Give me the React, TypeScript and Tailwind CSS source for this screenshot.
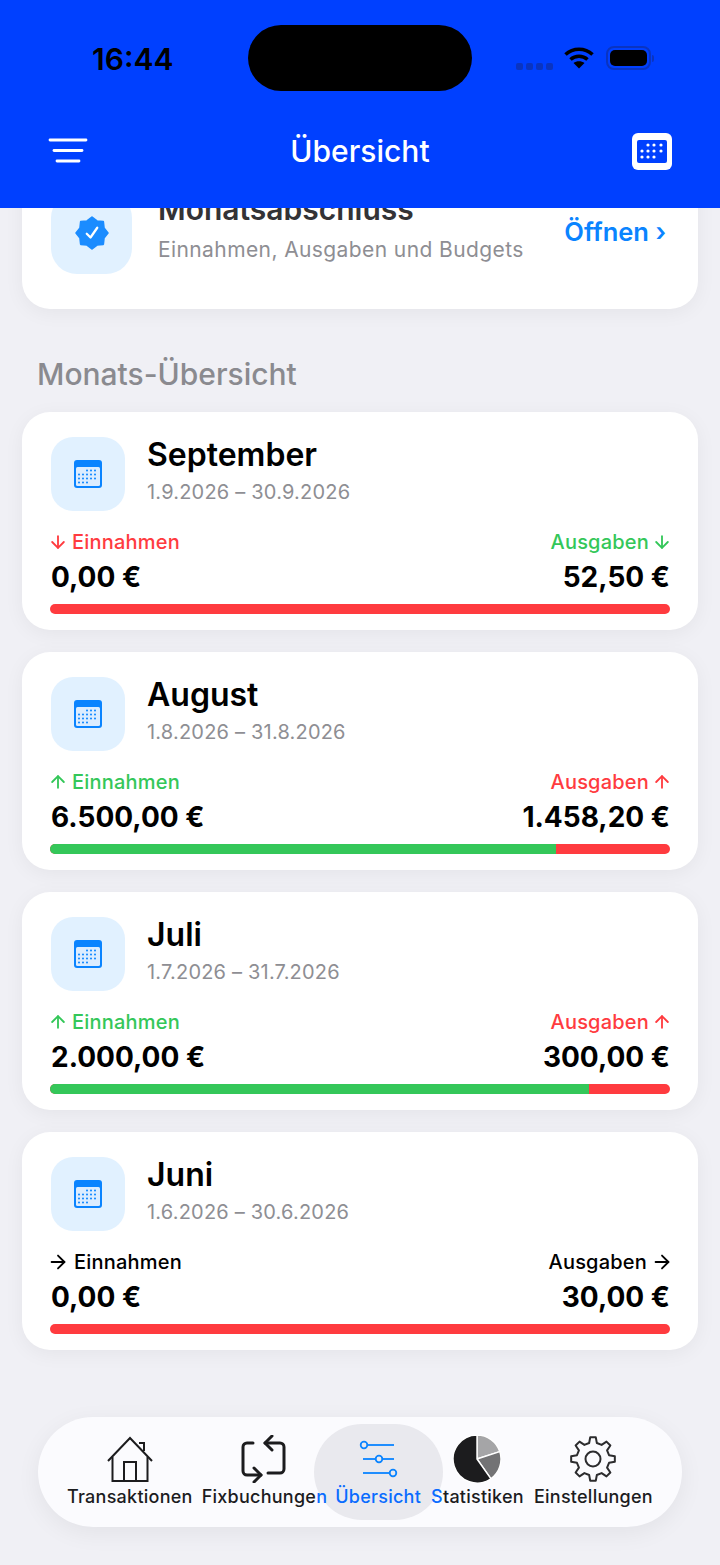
import { ArrowDown, ArrowRight, ArrowUp } from "lucide-react";

const months = [
  { name: "September", range: "1.9.2026 – 30.9.2026", income: "0,00 €", expense: "52,50 €", incomeColor: "text-[#ff3b3f]", expenseColor: "text-[#34c759]", dir: "down", green: 0 },
  { name: "August", range: "1.8.2026 – 31.8.2026", income: "6.500,00 €", expense: "1.458,20 €", incomeColor: "text-[#34c759]", expenseColor: "text-[#ff3b3f]", dir: "up", green: 81.6 },
  { name: "Juli", range: "1.7.2026 – 31.7.2026", income: "2.000,00 €", expense: "300,00 €", incomeColor: "text-[#34c759]", expenseColor: "text-[#ff3b3f]", dir: "up", green: 87 },
  { name: "Juni", range: "1.6.2026 – 30.6.2026", income: "0,00 €", expense: "30,00 €", incomeColor: "text-black", expenseColor: "text-black", dir: "flat", green: 0 },
];

const Arrow = ({ dir }: { dir: string }) => {
  if (dir === "down") return <ArrowDown size={20} strokeWidth={2.2} />;
  if (dir === "up") return <ArrowUp size={20} strokeWidth={2.2} />;
  return <ArrowRight size={22} strokeWidth={2} />;
};

const CalendarIcon = () => (
  <svg width="28" height="28" viewBox="0 0 28 28">
    <rect width="28" height="28" rx="3" fill="#0a84ff" />
    <rect x="2" y="7" width="24" height="19" rx="1.5" fill="#dcedff" />
    {[11, 15, 19, 23].map((y, r) =>
      [5, 9, 13, 17, 21].map((x, c) =>
        (r === 0 && c < 2) || (r === 3 && c > 2) ? null : (
          <circle key={`${x}-${y}`} cx={x} cy={y - 0.5} r="1" fill="#0a84ff" />
        ),
      ),
    )}
  </svg>
);

const gearPath = () => {
  const pts: string[] = [];
  const teeth = 8;
  const step = (Math.PI * 2) / teeth;
  for (let i = 0; i < teeth; i++) {
    const a = i * step - Math.PI / 2;
    const p = (ang: number, r: number) =>
      `${(24 + r * Math.cos(ang)).toFixed(2)} ${(24 + r * Math.sin(ang)).toFixed(2)}`;
    pts.push(p(a - step * 0.3, 16.5), p(a - step * 0.16, 22), p(a + step * 0.16, 22), p(a + step * 0.3, 16.5));
  }
  return `M${pts.join("L")}Z`;
};

// 8 pointed seal behind the check mark
const sealPath = () => {
  const pts: string[] = [];
  for (let i = 0; i < 16; i++) {
    const a = (i * Math.PI) / 8 - Math.PI / 2;
    const r = i % 2 === 0 ? 10.6 : 8.6;
    pts.push(`${(12 + r * Math.cos(a)).toFixed(2)} ${(12 + r * Math.sin(a)).toFixed(2)}`);
  }
  return `M${pts.join("L")}Z`;
};

const HouseIcon = () => (
  <svg width="48" height="48" viewBox="0 0 48 48" fill="none" stroke="#1c1c1e" strokeWidth="2">
    <path d="M2 26 24 3l22 23" />
    <path d="M6.500 22v24h35V22" />
    <path d="M18 46V27h12v19" />
    <path d="M33 8h5v8" />
  </svg>
);

const RepeatIcon = () => (
  <svg width="48" height="48" viewBox="0 0 48 48" fill="none" stroke="#1c1c1e" strokeWidth="3" strokeLinecap="round" strokeLinejoin="round">
    <path d="M13 8H7a4 4 0 0 0-4 4v24a4 4 0 0 0 4 4h14" />
    <path d="m14 33 7 7-7 7" />
    <path d="M25 8h15a4 4 0 0 1 4 4v22a4 4 0 0 1-4 4h-12" />
    <path d="m32 1-7 7 7 7" />
  </svg>
);

const SlidersIcon = () => (
  <svg width="40" height="44" viewBox="0 0 40 44" fill="none" stroke="#0a84ff" strokeWidth="1.8">
    <circle cx="6" cy="8" r="3.300" />
    <path d="M9.500 8H36" />
    <path d="M5 22h12.500" />
    <circle cx="21" cy="22" r="3.300" />
    <path d="M24.500 22H36" />
    <path d="M5 36h26.500" />
    <circle cx="35" cy="36" r="3.300" />
  </svg>
);

const PieIcon = () => (
  <svg width="48" height="48" viewBox="0 0 48 48" stroke="#ffffff" strokeWidth="1.4">
    <path d="M24 24V0a24 24 0 0 1 22.800 16.600Z" fill="#a5a5a7" />
    <path d="M24 24 46.800 16.600a24 24 0 0 1-9 27.100Z" fill="#737375" />
    <path d="M24 24 37.800 43.700A24 24 0 1 1 24 0Z" fill="#1c1c1e" />
  </svg>
);

const GearIcon = () => (
  <svg width="48" height="48" viewBox="0 0 48 48" fill="none" stroke="#2c2c2e" strokeWidth="2" strokeLinejoin="round">
    <path d={gearPath()} />
    <circle cx="24" cy="24" r="7.500" />
  </svg>
);

const BLUE = "text-[#0a6cff]";

const tabs = [
  { label: <>Transaktionen</>, key: "t", icon: <HouseIcon />, offset: "" },
  { label: <>Fixbuchunge<span className={BLUE}>n</span></>, key: "f", icon: <RepeatIcon />, offset: "" },
  { label: <>Übersicht</>, key: "u", icon: <SlidersIcon />, active: true, offset: "-ml-px" },
  { label: <><span className={BLUE}>S</span>tatistiken</>, key: "s", icon: <PieIcon />, offset: "ml-px" },
  { label: <>Einstellungen</>, key: "e", icon: <GearIcon />, offset: "ml-px" },
];

const MonthCard = ({ month }: { month: (typeof months)[number] }) => (
  <div className="h-[218px] rounded-[28px] bg-white px-[28px] pt-[25px] shadow-[0_4px_20px_rgba(0,0,0,0.05)]">
    <div className="flex gap-[22px]">
      <div className="ml-px flex h-[74px] w-[74px] items-center justify-center rounded-[22px] bg-[#e1f1ff]">
        <CalendarIcon />
      </div>
      <div className="-mt-px">
        <div className="text-[32px] leading-[38px] font-semibold text-black">{month.name}</div>
        <div className="mt-[6px] text-[20px] leading-[24px] tracking-[0.2px] text-[#8e8e93]">{month.range}</div>
      </div>
    </div>
    <div className="mt-[19px] flex justify-between">
      <div>
        <div className={`flex h-[24px] items-center text-[20px] leading-[24px] font-medium tracking-[0.2px] ${month.dir === "flat" ? "-ml-[3px] gap-[5px]" : "-ml-[2px] gap-[4px]"} ${month.incomeColor}`}>
          <Arrow dir={month.dir} />
          Einnahmen
        </div>
        <div className="mt-[6px] ml-px text-[28px] leading-[34px] font-bold text-black">{month.income}</div>
      </div>
      <div className="flex flex-col items-end">
        <div className={`flex h-[24px] items-center text-[20px] leading-[24px] font-medium tracking-[0.2px] ${month.dir === "flat" ? "-mr-[3px] gap-[4px]" : "-mr-[2px] gap-[3px]"} ${month.expenseColor}`}>
          Ausgaben
          <Arrow dir={month.dir} />
        </div>
        <div className="mt-[6px] text-[28px] leading-[34px] font-bold text-black">{month.expense}</div>
      </div>
    </div>
    <div className="mt-[10px] flex h-[10px] overflow-hidden rounded-full bg-[#ff3b3f]">
      <div className="bg-[#34c759]" style={{ width: `${month.green}%` }} />
    </div>
  </div>
);

export default function App() {
  return (
    <div className="relative h-[1565px] w-[720px] overflow-hidden bg-[#f0f0f5] font-['Inter','Liberation_Sans',sans-serif]">
      {/* Blue header */}
      <header className="relative z-10 h-[208px] bg-[#0040ff] px-[48px]">
        <div className="flex h-[116px] items-center">
          <div className="mt-[2px] w-[200px] pl-[44px] text-[30px] font-semibold text-black">16:44</div>
          <div className="h-[66px] w-[224px] rounded-[33px] bg-black" />
          <div className="ml-[44px] flex items-center">
            <div className="mt-[16px] flex gap-[3px]">
              <span className="h-[7px] w-[7px] rounded-[2px] bg-[#0a34c0]" />
              <span className="h-[7px] w-[7px] rounded-[2px] bg-[#0a34c0]" />
              <span className="h-[7px] w-[7px] rounded-[2px] bg-[#0a34c0]" />
              <span className="h-[7px] w-[7px] rounded-[2px] bg-[#0a34c0]" />
            </div>
            <svg className="ml-[11px]" width="30" height="24" viewBox="0 0 30 24" fill="none" stroke="#000" strokeWidth="3.600">
              <path d="M1.500 8.500C9 1.500 21 1.500 28.500 8.500" />
              <path d="M6.500 13.500c4.800-4.300 12.200-4.300 17 0" />
              <path fill="#000" stroke="none" d="M15 22.500 9.500 17c3-2.500 8-2.500 11 0Z" />
            </svg>
            <div className="ml-[12px] flex items-center">
              <div className="flex h-[24px] w-[45px] items-center justify-center rounded-[8px] border-2 border-[#0a34c0]">
                <div className="h-[16px] w-[37px] rounded-[5px] bg-black" />
              </div>
              <div className="ml-px h-[7px] w-[2px] rounded-r-full bg-[#0a34c0]" />
            </div>
          </div>
        </div>
        <div className="flex h-[70px] items-center justify-between">
          <svg width="40" height="32" viewBox="0 0 40 32" fill="none" stroke="#fff" strokeWidth="2.800" strokeLinecap="round">
            <path d="M2 5h36" />
            <path d="M6 15.500h28" />
            <path d="M9 26h22" />
          </svg>
          <h1 className="text-[30px] font-medium text-white">Übersicht</h1>
          <div className="flex h-[37px] w-[40px] items-center justify-center rounded-[6px] bg-white">
            <svg width="30" height="23" viewBox="0 0 30 23">
              <rect width="30" height="23" rx="2" fill="#0040ff" />
              {[5, 11, 17].map((y, r) =>
                [5, 11, 17, 24].map((x, c) =>
                  (r === 0 && c === 0) || (r === 2 && c === 3) ? null : (
                    <circle key={`${x}-${y}`} cx={x} cy={y} r="1.600" fill="#fff" />
                  ),
                ),
              )}
            </svg>
          </div>
        </div>
      </header>

      <main className="-mt-[38px] px-[22px]">
        {/* Monatsabschluss card, scrolled partly under the header */}
        <div className="flex h-[139px] rounded-[28px] bg-white pl-[29px] pr-[32px] pt-[22px] shadow-[0_4px_20px_rgba(0,0,0,0.05)]">
          <div className="flex h-[82px] w-[81px] items-center justify-center rounded-[26px] bg-[#e1f1ff]">
            <svg width="36" height="36" viewBox="0 0 24 24">
              <path d={sealPath()} fill="#1b8cff" stroke="#1b8cff" strokeWidth="1.200" strokeLinejoin="round" />
              <path d="m8.500 12.500 2.500 2.500 4.500-6.500" fill="none" stroke="#fff" strokeWidth="1.500" strokeLinecap="round" strokeLinejoin="round" />
            </svg>
          </div>
          <div className="ml-[26px] flex-1">
            <div className="-mt-[2px] text-[30px] leading-[38px] font-semibold text-[#333336]">Monatsabschluss</div>
            <div className="mt-[10px] text-[21px] leading-[24px] tracking-[0.4px] text-[#8e8e93]">Einnahmen, Ausgaben und Budgets</div>
          </div>
          <div className="mt-[25px] whitespace-nowrap text-[25.5px] leading-[30px] font-semibold text-[#0a84ff]">Öffnen ›</div>
        </div>

        <h2 className="h-[103px] pl-[15px] pt-[47px] text-[30px] leading-[36px] font-medium text-[#8a8a8f]">Monats-Übersicht</h2>

        <div className="flex flex-col gap-[22px]">
          {months.map((m) => (
            <MonthCard key={m.name} month={m} />
          ))}
        </div>
      </main>

      {/* Floating tab bar */}
      <nav className="absolute left-[38px] top-[1417px] flex h-[110px] w-[644px] gap-[9px] rounded-[55px] bg-[#fbfbfe] pl-[29px] pt-[18px] shadow-[0_6px_24px_rgba(0,0,0,0.06)]">
        {tabs.map((t) => (
          <div key={t.key} className={`relative flex flex-col items-center ${t.offset}`}>
            {t.active && <span className="absolute -left-[21px] -right-[22px] -top-[11px] z-0 h-[96px] rounded-[48px] bg-[#e9e9ee]" />}
            <div className="relative z-10 flex h-[48px] items-center justify-center">{t.icon}</div>
            <div className={`relative z-10 mt-[3px] whitespace-nowrap text-[18px] leading-[22px] font-medium tracking-[0.25px] ${t.active ? BLUE : "text-[#1c1c1e]"}`}>
              {t.label}
            </div>
          </div>
        ))}
      </nav>
    </div>
  );
}
